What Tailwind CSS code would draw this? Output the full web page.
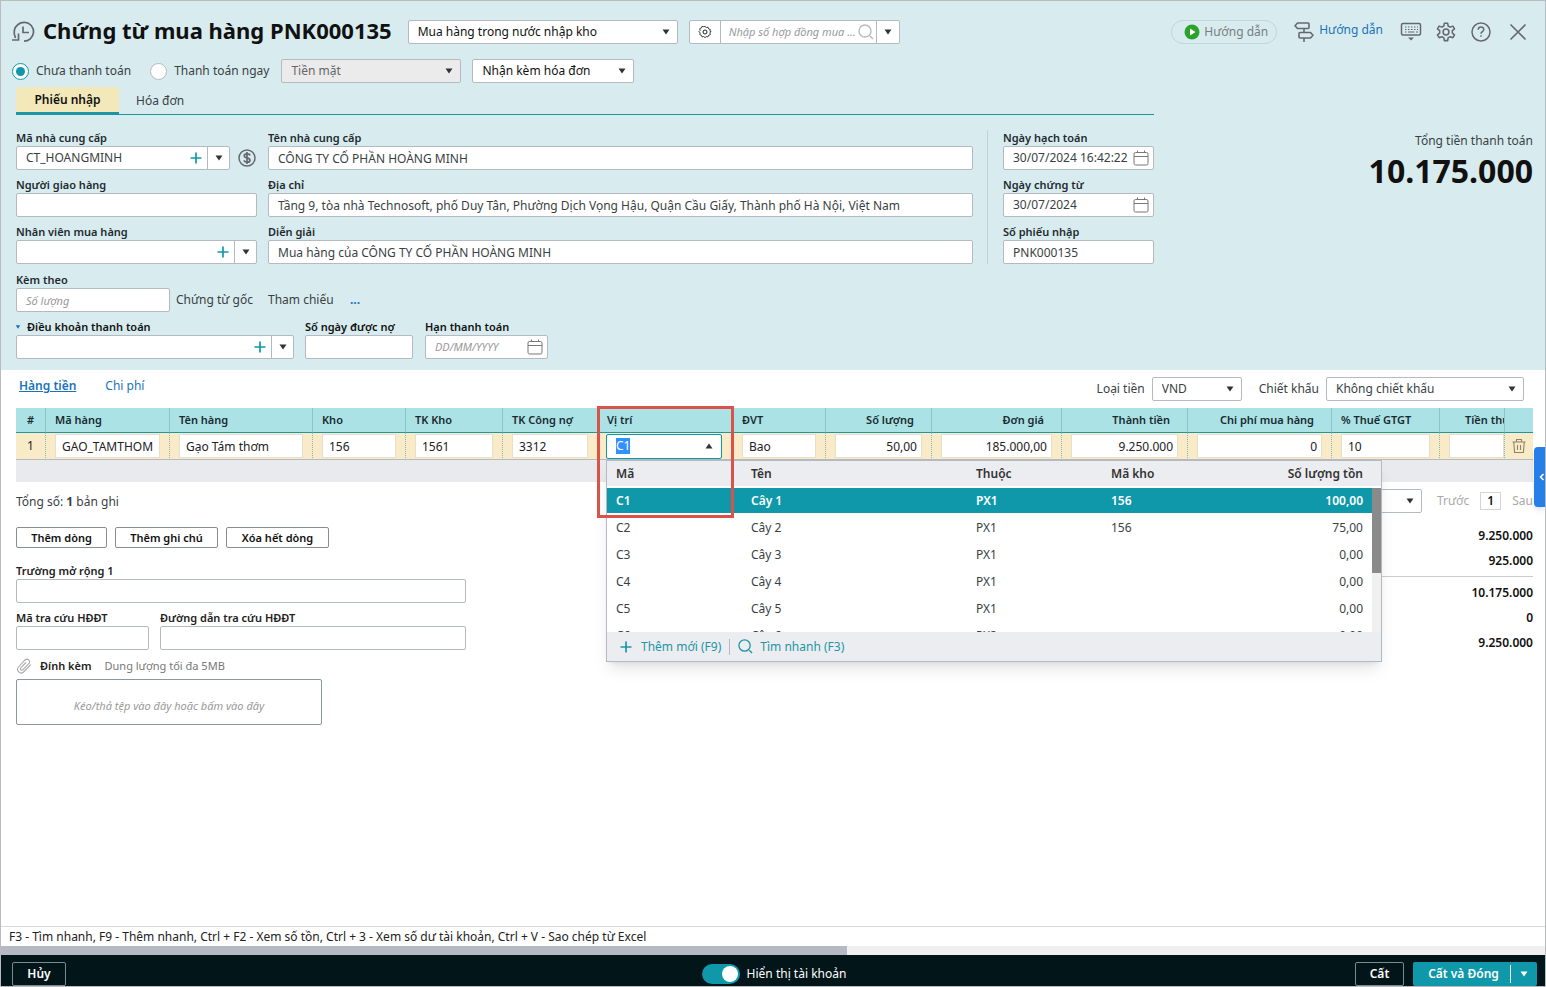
<!DOCTYPE html>
<html lang="vi">
<head>
<meta charset="utf-8">
<meta name="viewport" content="width=device-width, initial-scale=1">
<title>Chứng từ mua hàng</title>
<script src="https://cdn.jsdelivr.net/npm/@tailwindcss/browser@4"></script>
</head>
<body class="font-['Noto_Sans',sans-serif] text-[12px] leading-4 text-[#3a3f44]">
<svg class="hidden" aria-hidden="true">
  <symbol id="caret" viewBox="0 0 8 6"><path d="M0.5 0.5h7L4 5.5z" fill="currentColor"/></symbol>
  <symbol id="plus" viewBox="0 0 12 12"><path d="M6 0.5v11M0.5 6h11" stroke="currentColor" stroke-width="1.7"/></symbol>
  <symbol id="cal" viewBox="0 0 16 16"><path d="M2.500 2.500h11a1.500 1.500 0 0 1 1.500 1.500v9.500a1.500 1.500 0 0 1-1.500 1.500h-11A1.500 1.500 0 0 1 1 13.500V4a1.500 1.500 0 0 1 1.500-1.500zM1 6.500h14M4.500 0.500v2.500M11.500 0.500v2.500" fill="none" stroke="currentColor"/></symbol>
  <symbol id="search" viewBox="0 0 16 16"><path d="M13 7A6 6 0 1 1 1 7a6 6 0 0 1 12 0zM12 12l3 3" fill="none" stroke="currentColor" stroke-width="1.400"/></symbol>
</svg>
<div class="flex h-screen flex-col overflow-hidden border border-[#b9bcbf] bg-white">
  <header class="bg-[#d8ecef] pr-3 pl-[15px] pt-[19px] pb-[11px]">
    <div class="-ml-1 flex h-6 items-center pr-[6px]">
      <svg class="size-6 shrink-0 text-[#65696f]" viewBox="0 0 24 24" fill="none" stroke="currentColor" stroke-width="1.700"><path d="M3.500 18C1 13 2 7.500 6 4.500c4-3.200 10-2.700 13.200 1 3.500 4 3 10-.9 13.300-1.800 1.600-4 2.300-6.300 2.300"/><path d="M0 20h6.500v-6.500M11 6.500v6h6"/></svg>
      <h1 class="ml-[7px] pb-1 text-[22px] leading-6 font-bold whitespace-nowrap text-[#111]">Chứng từ mua hàng PNK000135</h1>
      <div class="relative ml-4 w-[270px]">
        <select aria-label="Loại chứng từ" class="h-6 w-full appearance-none rounded-xs border border-[#b4b9c2] bg-white pr-6 pl-[9px] text-[#111]"><option>Mua hàng trong nước nhập kho</option></select>
        <svg class="pointer-events-none absolute top-[9px] right-2 h-1.5 w-2 text-[#333]"><use href="#caret"/></svg>
      </div>
      <div class="ml-[11px] flex h-6 w-[211px] items-stretch rounded-xs border border-[#b4b9c2] bg-white">
        <button aria-label="Thiết lập" class="grid w-[31px] place-items-center border-r border-[#b4b9c2] text-[#222]"><svg class="size-3.5" viewBox="0 0 14 14" fill="none" stroke="currentColor"><path d="M7 1l1.500 1.300 2-.4.700 1.900 1.900.7-.4 2L14 7l-1.300 1.500.4 2-1.900.700-.700 1.900-2-.4L7 14l-1.500-1.300-2 .4-.7-1.900-1.900-.7.400-2L0 7l1.300-1.500-.4-2 1.900-.7.700-1.900 2 .4z" transform="translate(1 .6) scale(.86)"/><circle cx="7" cy="7" r="2"/></svg></button>
        <input aria-label="Số hợp đồng mua" placeholder="Nhập số hợp đồng mua ..." class="w-0 min-w-0 flex-1 pl-2 text-[11px] italic outline-none placeholder:text-[#999]">
        <button aria-label="Tìm hợp đồng" class="grid w-[21px] place-items-center border-r border-[#b4b9c2] text-[#bbb]"><svg class="size-4"><use href="#search"/></svg></button>
        <button aria-label="Mở danh sách hợp đồng" class="grid w-[22px] place-items-center text-[#333]"><svg class="h-1.5 w-2"><use href="#caret"/></svg></button>
      </div>
      <button class="ml-auto flex h-6 items-center gap-1 rounded-full border border-[#c5d5d8] px-2 pl-3 text-[12px] text-[#7a7d80]"><svg class="size-4" viewBox="0 0 16 16"><circle cx="8" cy="8" r="7.500" fill="#2ba32b"/><path d="M6 4.500v7L11.500 8z" fill="#fff"/></svg>Hướng dẫn</button>
      <a href="#" class="ml-4 flex items-center gap-1 text-[#1a73b8]"><svg class="size-[22px] text-[#65696f]" viewBox="0 0 22 22" fill="none" stroke="currentColor" stroke-width="1.600" stroke-linejoin="round"><path d="M4.500 2H15a1 1 0 0 1 1 1v3.500a1 1 0 0 1-1 1H4.500L2 4.700zM7 11.500h10.500l2.500 2.800-2.500 2.700H7a1 1 0 0 1-1-1v-3.500a1 1 0 0 1 1-1zM11 7.500v4M11 17v4"/></svg><span class="pb-1">Hướng dẫn</span></a>
      <div class="ml-[17px] flex items-center gap-[13px] text-[#65696f]">
        <button aria-label="Phím tắt"><svg class="block size-[22px]" viewBox="0 0 22 22" fill="none" stroke="currentColor" stroke-width="1.500"><rect x="1.500" y="2.500" width="19" height="11.500" rx="1.500"/><path d="M5 6h1.500M8 6h1.500M11 6h1.500M14 6h1.500M17 6h1M5 8.500h1.500M8 8.500h1.500M11 8.500h1.500M14 8.500h1.500M17 8.500h1M5 11h1.500M8 11h6.500M16 11h2" stroke-width="1.200"/><path d="M8 16.500h6L11 19.500z" fill="currentColor" stroke="none"/></svg></button>
        <button aria-label="Cài đặt"><svg class="block size-[22px]" viewBox="0 0 24 24" fill="none" stroke="currentColor" stroke-width="1.700" stroke-linejoin="round"><path d="M9.700 4.500 10.200 1.500h3.600l.5 3 2.300 1.300 2.900-1.100 1.800 3.100-2.400 1.900v2.600l2.400 1.900-1.800 3.100-2.900-1.100-2.300 1.300-.5 3h-3.600l-.5-3-2.300-1.300-2.900 1.100-1.800-3.100 2.400-1.900V9.700L2.700 7.800l1.800-3.100 2.900 1.100z" transform="translate(0 .9)"/><circle cx="12" cy="12" r="3.200"/></svg></button>
        <button aria-label="Trợ giúp"><svg class="block size-[22px]" viewBox="0 0 22 22" fill="none" stroke="currentColor" stroke-width="1.500"><circle cx="11" cy="11" r="9"/><path d="M8.200 8.700c0-3.600 5.600-3.400 5.600-.2 0 2-2.800 2.300-2.800 4.300M11 14.300v1.500"/></svg></button>
        <button aria-label="Đóng" class="ml-1"><svg class="block size-[18px]" viewBox="0 0 18 18" fill="none" stroke="currentColor" stroke-width="1.600"><path d="M1.500 1.500l15 15M16.500 1.500l-15 15"/></svg></button>
      </div>
    </div>

    <div class="-ml-1 mt-[15px] flex h-6 items-center">
      <label class="flex items-center gap-[7px]"><input type="radio" name="pay" checked class="grid size-[17px] appearance-none place-items-center rounded-full border border-[#0f98aa] bg-white before:size-[9px] before:rounded-full before:bg-[#0f98aa]">Chưa thanh toán</label>
      <label class="ml-[19px] flex items-center gap-[7px]"><input type="radio" name="pay" class="size-[17px] appearance-none rounded-full border border-[#b4b9c2] bg-white">Thanh toán ngay</label>
      <div class="relative ml-3 w-[180px]">
        <select aria-label="Phương thức" disabled class="h-6 w-full appearance-none rounded-xs border border-[#b4b9c2] bg-[#ebebeb] pr-6 pl-[9px] text-[#666] opacity-100"><option>Tiền mặt</option></select>
        <svg class="pointer-events-none absolute top-[9px] right-2 h-1.5 w-2 text-[#333]"><use href="#caret"/></svg>
      </div>
      <div class="relative ml-[11px] w-[162px]">
        <select aria-label="Hóa đơn" class="h-6 w-full appearance-none rounded-xs border border-[#b4b9c2] bg-white pr-6 pl-[9px] text-[#111]"><option>Nhận kèm hóa đơn</option></select>
        <svg class="pointer-events-none absolute top-[9px] right-2 h-1.5 w-2 text-[#333]"><use href="#caret"/></svg>
      </div>
    </div>

    <div class="mt-1 flex justify-between gap-6">
      <div class="w-[1138px] shrink">
        <nav class="flex h-7 items-stretch border-b border-[#1d96a3]">
          <button class="-mb-px w-[103px] rounded-t-sm border-b-3 border-[#1d96a3] bg-[#f3e8ba] font-semibold text-[#111]">Phiếu nhập</button>
          <button class="ml-[17px]">Hóa đơn</button>
        </nav>
        <div class="mt-[15px] grid grid-cols-[241px_1fr_170px] gap-x-[11px]">
          <div class="flex flex-col gap-[7px]">
            <div>
              <label for="f1" class="block text-[11px] font-semibold text-[#1f2a30]">Mã nhà cung cấp</label>
              <div class="flex items-center">
                <div class="flex h-6 w-[214px] items-stretch rounded-xs border border-[#b4b9c2] bg-white">
                  <input id="f1" value="CT_HOANGMINH" class="w-0 min-w-0 flex-1 pl-[9px] outline-none">
                  <button aria-label="Thêm nhà cung cấp" class="grid w-[22px] place-items-center text-[#0f98aa]"><svg class="size-3"><use href="#plus"/></svg></button>
                  <button aria-label="Chọn nhà cung cấp" class="grid w-[22px] place-items-center border-l border-[#b4b9c2] text-[#333]"><svg class="h-1.5 w-2"><use href="#caret"/></svg></button>
                </div>
                <button aria-label="Công nợ" class="ml-2 text-[#65696f]"><svg class="block size-[18px]" viewBox="0 0 18 18" fill="none" stroke="currentColor" stroke-width="1.500"><circle cx="9" cy="9" r="8"/><path d="M12 6.500C11.500 4.300 6.200 4.200 6.200 6.700c0 2.600 5.800 1.700 5.800 4.500 0 2.700-5.500 2.600-6 .2M9 3v12" stroke-width="1.700"/></svg></button>
              </div>
            </div>
            <div>
              <label for="f2" class="block text-[11px] font-semibold text-[#1f2a30]">Người giao hàng</label>
              <input id="f2" class="block h-6 w-full rounded-xs border border-[#b4b9c2] bg-white px-[9px]">
            </div>
            <div>
              <label for="f3" class="block text-[11px] font-semibold text-[#1f2a30]">Nhân viên mua hàng</label>
              <div class="flex h-6 items-stretch rounded-xs border border-[#b4b9c2] bg-white">
                <input id="f3" class="w-0 min-w-0 flex-1 pl-[9px] outline-none">
                <button aria-label="Thêm nhân viên" class="grid w-[22px] place-items-center text-[#0f98aa]"><svg class="size-3"><use href="#plus"/></svg></button>
                <button aria-label="Chọn nhân viên" class="grid w-[22px] place-items-center border-l border-[#b4b9c2] text-[#333]"><svg class="h-1.5 w-2"><use href="#caret"/></svg></button>
              </div>
            </div>
          </div>
          <div class="flex flex-col gap-[7px]">
            <div><label for="f4" class="block text-[11px] font-semibold text-[#1f2a30]">Tên nhà cung cấp</label>
              <input id="f4" value="CÔNG TY CỔ PHẦN HOÀNG MINH" class="block h-6 w-full rounded-xs border border-[#b4b9c2] bg-white px-[9px]"></div>
            <div><label for="f5" class="block text-[11px] font-semibold text-[#1f2a30]">Địa chỉ</label>
              <input id="f5" value="Tầng 9, tòa nhà Technosoft, phố Duy Tân, Phường Dịch Vọng Hậu, Quận Cầu Giấy, Thành phố Hà Nội, Việt Nam" class="block h-6 w-full rounded-xs border border-[#b4b9c2] bg-white px-[9px]"></div>
            <div><label for="f6" class="block text-[11px] font-semibold text-[#1f2a30]">Diễn giải</label>
              <input id="f6" value="Mua hàng của CÔNG TY CỔ PHẦN HOÀNG MINH" class="block h-6 w-full rounded-xs border border-[#b4b9c2] bg-white px-[9px]"></div>
          </div>
          <div class="ml-[3px] flex flex-col gap-[7px] border-l border-[#c3d0db] pl-[15px]">
            <div><label for="f7" class="block text-[11px] font-semibold text-[#1f2a30]">Ngày hạch toán</label>
              <div class="flex h-6 items-center rounded-xs border border-[#b4b9c2] bg-white pr-1"><input id="f7" value="30/07/2024 16:42:22" class="w-0 min-w-0 flex-1 pl-[9px] outline-none"><button aria-label="Chọn ngày hạch toán" class="text-[#777]"><svg class="block size-4"><use href="#cal"/></svg></button></div></div>
            <div><label for="f8" class="block text-[11px] font-semibold text-[#1f2a30]">Ngày chứng từ</label>
              <div class="flex h-6 items-center rounded-xs border border-[#b4b9c2] bg-white pr-1"><input id="f8" value="30/07/2024" class="w-0 min-w-0 flex-1 pl-[9px] outline-none"><button aria-label="Chọn ngày chứng từ" class="text-[#777]"><svg class="block size-4"><use href="#cal"/></svg></button></div></div>
            <div><label for="f9" class="block text-[11px] font-semibold text-[#1f2a30]">Số phiếu nhập</label>
              <input id="f9" value="PNK000135" class="block h-6 w-full rounded-xs border border-[#b4b9c2] bg-white px-[9px]"></div>
          </div>
        </div>
        <div class="mt-2">
          <label for="f10" class="block text-[11px] font-semibold text-[#1f2a30]">Kèm theo</label>
          <div class="flex items-center">
            <input id="f10" placeholder="Số lượng" class="block h-6 w-[154px] rounded-xs border border-[#b4b9c2] bg-white px-[9px] text-[11px] placeholder:text-[#999] placeholder:italic">
            <span class="ml-1.5 w-[92px]">Chứng từ gốc</span><span class="w-[82px]">Tham chiếu</span><a href="#" class="font-bold text-[#1a73b8]">...</a>
          </div>
        </div>
        <div class="mt-[7px] flex">
          <div class="w-[278px]">
            <label for="f11" class="flex items-center text-[11px] font-semibold text-[#111]"><svg class="-ml-px mr-1.5 h-1 w-1.5 text-[#1a73b8]"><use href="#caret"/></svg>Điều khoản thanh toán</label>
            <div class="flex h-6 items-stretch rounded-xs border border-[#b4b9c2] bg-white">
              <input id="f11" class="w-0 min-w-0 flex-1 pl-[9px] outline-none">
              <button aria-label="Thêm điều khoản" class="grid w-[22px] place-items-center text-[#0f98aa]"><svg class="size-3"><use href="#plus"/></svg></button>
              <button aria-label="Chọn điều khoản" class="grid w-[22px] place-items-center border-l border-[#b4b9c2] text-[#333]"><svg class="h-1.5 w-2"><use href="#caret"/></svg></button>
            </div>
          </div>
          <div class="ml-[11px] w-[108px]"><label for="f12" class="block text-[11px] font-semibold text-[#111]">Số ngày được nợ</label>
            <input id="f12" class="block h-6 w-full rounded-xs border border-[#b4b9c2] bg-white px-[9px]"></div>
          <div class="ml-3 w-[123px]"><label for="f13" class="block text-[11px] font-semibold text-[#111]">Hạn thanh toán</label>
            <div class="flex h-6 items-center rounded-xs border border-[#b4b9c2] bg-white pr-1"><input id="f13" placeholder="DD/MM/YYYY" class="w-0 min-w-0 flex-1 pl-[9px] text-[11px] outline-none placeholder:text-[#999] placeholder:italic"><button aria-label="Chọn hạn thanh toán" class="text-[#777]"><svg class="block size-4"><use href="#cal"/></svg></button></div></div>
        </div>
      </div>
      <div class="mt-[46px] text-right">
        <div>Tổng tiền thanh toán</div>
        <div class="mt-[3px] text-[32px] leading-[38px] font-bold text-[#111]">10.175.000</div>
      </div>
    </div>
  </header>

  <main class="relative flex min-h-0 flex-1 flex-col pr-3 pl-[15px]">
    <div class="flex h-[38px] shrink-0 items-center pr-[9px]">
      <nav class="flex gap-[29px] pb-1.5 pl-[3px]"><a href="#" class="font-semibold text-[#1a73b8] underline">Hàng tiền</a><a href="#" class="text-[#1a73b8]">Chi phí</a></nav>
      <label for="cur" class="ml-auto">Loại tiền</label>
      <div class="relative ml-[7px] w-[90px]">
        <select id="cur" class="h-6 w-full appearance-none rounded-xs border border-[#b4b9c2] bg-white pr-6 pl-[9px]"><option>VND</option></select>
        <svg class="pointer-events-none absolute top-[9px] right-2 h-1.5 w-2 text-[#333]"><use href="#caret"/></svg>
      </div>
      <label for="disc" class="ml-[17px]">Chiết khấu</label>
      <div class="relative ml-[7px] w-[198px]">
        <select id="disc" class="h-6 w-full appearance-none rounded-xs border border-[#b4b9c2] bg-white pr-6 pl-[9px]"><option>Không chiết khấu</option></select>
        <svg class="pointer-events-none absolute top-[9px] right-2 h-1.5 w-2 text-[#333]"><use href="#caret"/></svg>
      </div>
    </div>

    <table class="w-full shrink-0 table-fixed border-separate border-spacing-0">
      <colgroup><col class="w-[30px]"><col class="w-[124px]"><col><col class="w-[93px]"><col class="w-[97px]"><col class="w-[95px]"><col class="w-[135px]"><col class="w-[93px]"><col class="w-[106px]"><col class="w-[130px]"><col class="w-[126px]"><col class="w-[144px]"><col class="w-[108px]"><col class="w-[65px]"><col class="w-[28px]"></colgroup>
      <thead>
        <tr class="h-[25px] bg-[#aae2e5] text-left text-[11px] text-[#1a2a30] *:border-r *:border-b *:border-r-[#8cc5c9] *:border-b-[#1d96a3] *:p-0 *:font-semibold *:whitespace-nowrap *:last:border-r-0">
          <th class="text-center">#</th><th><span class="pl-[9px]">Mã hàng</span></th><th><span class="pl-[9px]">Tên hàng</span></th><th><span class="pl-[9px]">Kho</span></th><th><span class="pl-[9px]">TK Kho</span></th><th><span class="pl-[9px]">TK Công nợ</span></th><th><span class="pl-[9px]">Vị trí</span></th><th><span class="pl-[9px]">ĐVT</span></th><th class="text-right"><span class="pr-[17px]">Số lượng</span></th><th class="text-right"><span class="pr-[17px]">Đơn giá</span></th><th class="text-right"><span class="pr-[17px]">Thành tiền</span></th><th class="text-right"><span class="pr-[17px]">Chi phí mua hàng</span></th><th><span class="pl-[9px]">% Thuế GTGT</span></th><th class="overflow-hidden"><span class="pl-[25px]">Tiền thuế</span></th><th aria-label="Thao tác"></th>
        </tr>
      </thead>
      <tbody>
        <tr class="h-[27px] bg-[#f9ebc8] text-[#222] *:border-r *:border-b *:border-r-[#7fbcbc] *:border-b-[#b4b9c2] *:p-0 *:[border-right-style:dotted] *:last:border-r-0">
          <td class="text-center">1</td>
          <td><div class="px-[9px]"><input aria-label="Mã hàng" value="GAO_TAMTHOM" class="block h-6 w-full border border-[#e8dfc8] bg-white px-1.5"></div></td>
          <td><div class="px-[9px]"><input aria-label="Tên hàng" value="Gạo Tám thơm" class="block h-6 w-full border border-[#e8dfc8] bg-white px-1.5"></div></td>
          <td><div class="px-[9px]"><input aria-label="Kho" value="156" class="block h-6 w-full border border-[#e8dfc8] bg-white px-1.5"></div></td>
          <td><div class="px-[9px]"><input aria-label="TK Kho" value="1561" class="block h-6 w-full border border-[#e8dfc8] bg-white px-1.5"></div></td>
          <td><div class="px-[9px]"><input aria-label="TK Công nợ" value="3312" class="block h-6 w-full border border-[#e8dfc8] bg-white px-1.5"></div></td>
          <td class="relative">
            <div class="ml-2 flex h-[25px] w-[116px] items-center rounded-xs border border-[#0f98aa] bg-white pr-2">
              <input id="loc" aria-label="Vị trí" value="C1" class="w-0 min-w-0 flex-1 pl-[9px] outline-none selection:bg-[#3390ff] selection:text-white"><svg class="h-1.5 w-2 rotate-180 text-[#333]"><use href="#caret"/></svg>
            </div>
            <div class="absolute top-[27px] left-2 z-20 w-[776px] border border-[#b4b9c2] bg-white text-[#3a3f44] shadow-lg">
              <div class="flex h-[171px] flex-col overflow-hidden">
                <table class="w-full table-fixed border-separate border-spacing-0">
                  <colgroup><col class="w-[135px]"><col class="w-[225px]"><col class="w-[135px]"><col class="w-[116px]"><col><col class="w-[9px]"></colgroup>
                  <thead><tr class="h-[27px] text-left text-[#333] *:border-b-2 *:border-white *:bg-[#ecedf1] *:px-[9px] *:py-0 *:font-semibold"><th>Mã</th><th>Tên</th><th>Thuộc</th><th>Mã kho</th><th class="text-right">Số lượng tồn</th><th></th></tr></thead>
                  <tbody class="[&_td]:border-b-2 [&_td]:border-white [&_td]:px-[9px] [&_td]:py-0">
                    <tr class="h-[27px] font-semibold text-white"><td class="bg-[#0f98aa]">C1</td><td class="bg-[#0f98aa]">Cây 1</td><td class="bg-[#0f98aa]">PX1</td><td class="bg-[#0f98aa]">156</td><td class="bg-[#0f98aa] text-right">100,00</td></tr>
                    <tr class="h-[27px]"><td>C2</td><td>Cây 2</td><td>PX1</td><td>156</td><td class="text-right">75,00</td></tr>
                    <tr class="h-[27px]"><td>C3</td><td>Cây 3</td><td>PX1</td><td></td><td class="text-right">0,00</td></tr>
                    <tr class="h-[27px]"><td>C4</td><td>Cây 4</td><td>PX1</td><td></td><td class="text-right">0,00</td></tr>
                    <tr class="h-[27px]"><td>C5</td><td>Cây 5</td><td>PX1</td><td></td><td class="text-right">0,00</td></tr>
                    <tr class="h-[27px]"><td>C6</td><td>Cây 6</td><td>PX2</td><td></td><td class="text-right">0,00</td></tr>
                  </tbody>
                </table>
              </div>
              <div class="absolute top-[27px] right-0 h-[144px] w-[9px] bg-[#f0f0f0]"><div class="h-[85px] bg-[#8a8a8a]"></div></div>
              <div class="flex h-[29px] items-center bg-[#ecedf1] pl-[13px] text-[#1d96a3]">
                <button class="flex items-center gap-[9px]"><svg class="size-3"><use href="#plus"/></svg>Thêm mới (F9)</button>
                <span class="mx-2 h-4 w-px bg-[#b4b9c2]"></span>
                <button class="flex items-center gap-[7px]"><svg class="size-[15px]"><use href="#search"/></svg>Tìm nhanh (F3)</button>
              </div>
            </div>
            <div class="pointer-events-none absolute top-[-27px] -left-px z-30 h-[112px] w-[137px] border-3 border-[#d9534a]"></div>
          </td>
          <td><div class="px-[9px]"><input aria-label="ĐVT" value="Bao" class="block h-6 w-full border border-[#e8dfc8] bg-white px-1.5"></div></td>
          <td><div class="px-[9px]"><input aria-label="Số lượng" value="50,00" class="block h-6 w-full border border-[#e8dfc8] bg-white px-1 text-right"></div></td>
          <td><div class="px-[9px]"><input aria-label="Đơn giá" value="185.000,00" class="block h-6 w-full border border-[#e8dfc8] bg-white px-1 text-right"></div></td>
          <td><div class="px-[9px]"><input aria-label="Thành tiền" value="9.250.000" class="block h-6 w-full border border-[#e8dfc8] bg-white px-1 text-right"></div></td>
          <td><div class="px-[9px]"><input aria-label="Chi phí mua hàng" value="0" class="block h-6 w-full border border-[#e8dfc8] bg-white px-1 text-right"></div></td>
          <td><div class="px-[9px]"><input aria-label="% Thuế GTGT" value="10" class="block h-6 w-full border border-[#e8dfc8] bg-white px-1.5"></div></td>
          <td><div class="pl-[9px]"><input aria-label="Tiền thuế GTGT" class="block h-6 w-full border border-[#e8dfc8] bg-white px-1"></div></td>
          <td><button aria-label="Xóa dòng" class="mx-auto block text-[#8a8468]"><svg class="block size-4" viewBox="0 0 16 16" fill="none" stroke="currentColor" stroke-width="1.100"><path d="M1.500 4h13M5.500 4V1.500h5V4M2.800 4.500l.8 10h8.800l.8-10M6.500 7v5M9.500 7v5"/></svg></button></td>
        </tr>
      </tbody>
    </table>
    <div class="h-[22px] shrink-0 bg-[#e9eaee]"></div>

    <div class="flex items-start justify-between">
      <section class="w-[450px]">
        <p class="mt-3">Tổng số: <b class="font-bold">1</b> bản ghi</p>
        <div class="mt-[17px] flex gap-2 text-[11px] font-semibold text-[#111]">
          <button class="h-[21px] w-[91px] rounded-xs border border-[#888d92] leading-none">Thêm dòng</button>
          <button class="h-[21px] w-[103px] rounded-xs border border-[#888d92] leading-none">Thêm ghi chú</button>
          <button class="h-[21px] w-[103px] rounded-xs border border-[#888d92] leading-none">Xóa hết dòng</button>
        </div>
        <label for="g1" class="mt-[15px] block text-[11px] font-semibold text-[#222]">Trường mở rộng 1</label>
        <input id="g1" class="block h-6 w-full rounded-xs border border-[#b4b9c2] px-[9px]">
        <div class="mt-[7px] flex gap-[11px]">
          <div class="w-[133px]"><label for="g2" class="block text-[11px] font-semibold text-[#222]">Mã tra cứu HĐĐT</label><input id="g2" class="block h-6 w-full rounded-xs border border-[#b4b9c2] px-[9px]"></div>
          <div class="flex-1"><label for="g3" class="block text-[11px] font-semibold text-[#222]">Đường dẫn tra cứu HĐĐT</label><input id="g3" class="block h-6 w-full rounded-xs border border-[#b4b9c2] px-[9px]"></div>
        </div>
        <div class="mt-2 flex items-center text-[11px]">
          <svg class="size-4 text-[#aaa]" viewBox="0 0 16 16" fill="none" stroke="currentColor" stroke-width="1.100"><path d="M14 7.500l-6.500 6.500c-3 3-8-1.500-5-5L9 2c2.500-2.500 6 1 4 3.500l-6 6.200c-1.500 1.500-3.500-.5-2-2L10 4.500M14.800 6.500L13.500 8"/></svg>
          <b class="ml-2 font-semibold text-[#222]">Đính kèm</b><span class="ml-[13px] text-[#777]">Dung lượng tối đa 5MB</span>
        </div>
        <button class="mt-[5px] block h-[46px] w-[306px] rounded-xs border border-[#8b979f] pt-2 text-[11px] text-[#999] italic">Kéo/thả tệp vào đây hoặc bấm vào đây</button>
      </section>
      <section class="w-[450px]">
        <div class="mt-[7px] flex h-6 items-center text-[#aaa]">
          <div class="relative mr-[15px] ml-auto w-[200px]">
            <select aria-label="Số bản ghi trên trang" class="h-6 w-full appearance-none rounded-xs border border-[#b4b9c2] bg-white pl-[9px] text-[#333]"><option>20</option></select>
            <svg class="pointer-events-none absolute top-[9px] right-2 h-1.5 w-2 text-[#333]"><use href="#caret"/></svg>
          </div>
          <button>Trước</button><button class="mx-[11px] h-[18px] w-[21px] border border-[#d5d5d5] leading-none font-semibold text-[#111]">1</button><button>Sau</button>
        </div>
        <div class="mt-[10px] text-right font-semibold text-[#111]">
          <p class="leading-[25px]">9.250.000</p><p class="leading-[25px]">925.000</p>
          <hr class="my-[3px] border-[#ccc]">
          <p class="leading-[25px]">10.175.000</p><p class="leading-[25px]">0</p><p class="leading-[25px]">9.250.000</p>
        </div>
      </section>
    </div>
    <button aria-label="Mở bảng bên" class="absolute top-[77px] right-0 z-10 grid h-[60px] w-[11px] place-items-center rounded-l-sm bg-[#267ee8] text-white shadow-md"><svg class="ml-1 h-2 w-1.5" viewBox="0 0 6 8" fill="none" stroke="currentColor" stroke-width="1.500"><path d="M4.500 1L1.500 4l3 3"/></svg></button>
  </main>

  <div class="shrink-0 border-t border-[#d8dadc] pt-0.5 pb-px pl-2 text-[#222]">F3 - Tìm nhanh, F9 - Thêm nhanh, Ctrl + F2 - Xem số tồn, Ctrl + 3 - Xem số dư tài khoản, Ctrl + V - Sao chép từ Excel</div>
  <div class="h-[9px] shrink-0 bg-[#f0f0f0]"><div class="h-full w-[54.8%] bg-[#b4b9c4]"></div></div>
  <footer class="grid h-[31px] shrink-0 grid-cols-[1fr_auto_1fr] items-start overflow-hidden bg-[#021519] px-2 pt-[7px] font-semibold text-white">
    <button class="ml-[3px] h-6 w-[54px] rounded-xs border border-[#7d8a8d]">Hủy</button>
    <label class="flex h-6 items-center gap-[7px] pl-0.5 font-normal"><input type="checkbox" checked class="flex h-5 w-[38px] appearance-none items-center justify-end rounded-full bg-[#0f98aa] pr-0.5 before:size-4 before:rounded-full before:bg-white">Hiển thị tài khoản</label>
    <div class="flex justify-end gap-[9px]">
      <button class="h-6 w-[49px] rounded-xs border border-[#7d8a8d]">Cất</button>
      <div class="flex h-6 w-[124px] items-center rounded-xs bg-[#0f98aa]"><button class="flex-1 pl-1">Cất và Đóng</button><button aria-label="Tùy chọn lưu" class="grid h-[18px] w-[27px] place-items-center border-l border-white"><svg class="h-1.5 w-2"><use href="#caret"/></svg></button></div>
    </div>
  </footer>
</div>
<script>
  const loc = document.getElementById('loc');
  loc.focus({ preventScroll: true });
  loc.select();
</script>
</body>
</html>
